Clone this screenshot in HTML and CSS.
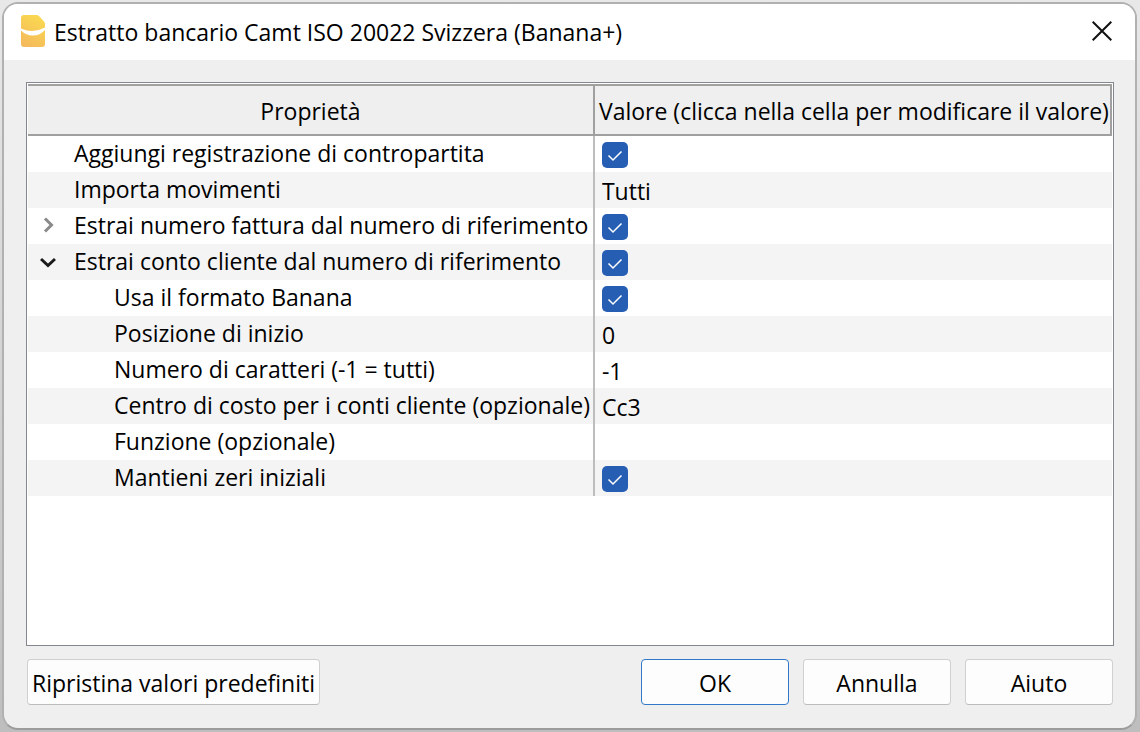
FILE: index.html
```
<!DOCTYPE html>
<html lang="it">
<head>
<meta charset="utf-8">
<title>Estratto bancario Camt ISO 20022 Svizzera (Banana+)</title>
<link rel="stylesheet" href="styles.css">
</head>
<body>
<main class="dialog" role="dialog" aria-labelledby="dialog-title">
  <header class="titlebar">
    <svg class="app-icon" viewBox="0 0 24 32" aria-hidden="true">
      <defs><linearGradient id="gold" x1="0.7" y1="0" x2="0.3" y2="1"><stop offset="0" stop-color="#fad950"/><stop offset="1" stop-color="#f4ba5c"/></linearGradient></defs>
      <path fill="url(#gold)" d="M3 0H15.500Q17 0 18 1L23 6.500Q24 7.500 24 9V29Q24 32 21 32H3Q0 32 0 29V3Q0 0 3 0Z"/>
      <path fill="#fff" d="M0 13.500Q12 19 24 12.500V15Q19 20.500 12 20.500Q5 20.500 0 15.500Z"/>
    </svg>
    <h1 class="title" id="dialog-title">Estratto bancario Camt ISO 20022 Svizzera (Banana+)</h1>
    <button class="close" type="button" aria-label="Chiudi">
      <svg class="close-icon" viewBox="0 0 20 20" aria-hidden="true"><path d="M0.700 0.700L19.300 19.300M19.300 0.700L0.700 19.300"/></svg>
    </button>
  </header>
  <form class="content">
    <div class="panel">
      <table class="properties">
        <thead>
          <tr><th class="name-head" scope="col">Proprietà</th><th class="value-head" scope="col">Valore (clicca nella cella per modificare il valore)</th></tr>
        </thead>
        <tbody>
          <tr><td class="name"><label for="contra">Aggiungi registrazione di contropartita</label></td><td class="value"><input class="check" type="checkbox" id="contra" checked></td></tr>
          <tr><td class="name"><label for="movements">Importa movimenti</label></td><td class="value"><select class="field" id="movements"><option>Tutti</option></select></td></tr>
          <tr><td class="name"><div class="branch"><button class="toggle" type="button" aria-expanded="false" aria-label="Espandi numero fattura"><svg class="arrow" viewBox="0 0 16 16" aria-hidden="true"><path d="M5 1.500L11.500 8L5 14.500"/></svg></button><label for="invoice">Estrai numero fattura dal numero di riferimento</label></div></td><td class="value"><input class="check" type="checkbox" id="invoice" checked></td></tr>
          <tr><td class="name"><div class="branch"><button class="toggle" type="button" aria-expanded="true" aria-label="Comprimi conto cliente"><svg class="arrow arrow-open" viewBox="0 0 16 16" aria-hidden="true"><path d="M1 6L8 12.500L15 6"/></svg></button><label for="customer">Estrai conto cliente dal numero di riferimento</label></div></td><td class="value"><input class="check" type="checkbox" id="customer" checked></td></tr>
          <tr><td class="name child"><label for="format">Usa il formato Banana</label></td><td class="value"><input class="check" type="checkbox" id="format" checked></td></tr>
          <tr><td class="name child"><label for="start">Posizione di inizio</label></td><td class="value"><input class="field" type="text" id="start" value="0"></td></tr>
          <tr><td class="name child"><label for="count">Numero di caratteri (-1 = tutti)</label></td><td class="value"><input class="field" type="text" id="count" value="-1"></td></tr>
          <tr><td class="name child"><label for="cost">Centro di costo per i conti cliente (opzionale)</label></td><td class="value"><input class="field" type="text" id="cost" value="Cc3"></td></tr>
          <tr><td class="name child"><label for="function">Funzione (opzionale)</label></td><td class="value"><input class="field" type="text" id="function" value=""></td></tr>
          <tr><td class="name child"><label for="zeros">Mantieni zeri iniziali</label></td><td class="value"><input class="check" type="checkbox" id="zeros" checked></td></tr>
        </tbody>
      </table>
    </div>
    <footer class="actions">
      <button class="button reset" type="button">Ripristina valori predefiniti</button>
      <button class="button primary" type="button">OK</button>
      <button class="button" type="button">Annulla</button>
      <button class="button" type="button">Aiuto</button>
    </footer>
  </form>
</main>
</body>
</html>
```
FILE: styles.css
```
* { box-sizing: border-box; }

body {
  margin: 0;
  min-height: 100vh;
  padding: 2px 3px 2px 2px;
  display: flex;
  background: linear-gradient(#e8e8e8, #bebebe);
  color: #000;
  font: 23px/32px "Open Sans", "Noto Sans", sans-serif;
}

button, input, select { font: inherit; color: inherit; }

.dialog {
  flex: 1;
  min-width: 0;
  display: flex;
  flex-direction: column;
  overflow: hidden;
  border: 2px solid #b1b1b1;
  border-bottom-color: #9c9c9c;
  border-radius: 16px;
  background: #efefef;
}

.titlebar {
  display: flex;
  align-items: center;
  height: 56px;
  padding: 0 23px 2px 17px;
  background: #fff;
}

.app-icon { width: 24px; height: 32px; }

.title {
  flex: 1;
  margin: 2px 0 0 9px;
  font-size: 23px;
  font-weight: 400;
  white-space: nowrap;
}

.close {
  display: flex;
  padding: 0;
  border: 0;
  background: none;
}

.close-icon {
  width: 20px;
  height: 20px;
  fill: none;
  stroke: #111;
  stroke-width: 2;
}

.content {
  flex: 1;
  display: flex;
  flex-direction: column;
  gap: 13px;
  padding: 22px 21px 23px 22px;
}

.panel {
  flex: 1;
  padding: 1px;
  border: 1px solid #828790;
  background: #fff;
}

.properties {
  width: 100%;
  table-layout: fixed;
  border-collapse: separate;
  border-spacing: 0;
  white-space: nowrap;
}

.name-head, .value-head {
  height: 52px;
  padding: 2px 0 0;
  border: solid #a0a0a0;
  border-width: 2px 2px 2px 0;
  background: #efefef;
  font-weight: 400;
}

.name-head { width: 52.3%; }

.value-head { padding-left: 4px; text-align: left; }

.name, .value { height: 36px; padding: 0; }

.name {
  padding: 0 0 2px 46px;
  border-right: 2px solid #bdbdbd;
}

.child { padding-left: 86px; }

.value { padding-left: 7px; }

tbody tr:nth-child(even) { background: #f4f4f4; }

.branch {
  display: flex;
  align-items: center;
  margin-left: -34px;
}

.toggle {
  display: flex;
  width: 34px;
  padding: 0;
  border: 0;
  background: none;
}

.arrow {
  width: 16px;
  height: 16px;
  fill: none;
  stroke: #8a8a8a;
  stroke-width: 3;
}

.arrow-open { stroke: #1a1a1a; }

.check {
  appearance: none;
  display: block;
  width: 26px;
  height: 26px;
  margin: 2px 0 0;
  border-radius: 5px;
  background: #fff;
  border: 1px solid #888;
}

.check:checked {
  border: 0;
  background: #265eb4 url("data:image/svg+xml,%3Csvg xmlns='http://www.w3.org/2000/svg' viewBox='0 0 26 26'%3E%3Cpath d='M6.500 13.500L11 18L19.500 9.500' fill='none' stroke='white' stroke-width='1.500'/%3E%3C/svg%3E");
}

.field {
  appearance: none;
  display: block;
  width: 100%;
  height: 32px;
  margin: 2px 0 0;
  padding: 0;
  border: 0;
  outline: 0;
  background: none;
}

.actions { display: flex; gap: 14px; padding: 0 1px; }

.button {
  width: 148px;
  height: 46px;
  padding: 2px 0 0;
  border: 1px solid #d0d0d0;
  border-bottom-color: #bcbcbc;
  border-radius: 4px;
  background: #fdfdfd;
  white-space: nowrap;
}

.reset { width: auto; margin-right: auto; padding: 2px 4px 0; }

.primary { border-color: #3278c8; }
```
